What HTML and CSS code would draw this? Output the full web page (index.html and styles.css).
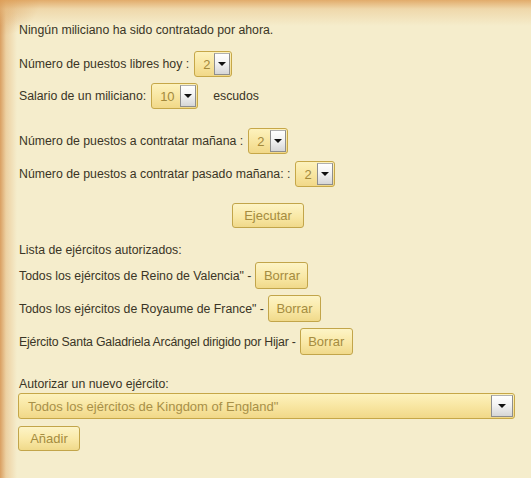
FILE: index.html
```html
<!DOCTYPE html>
<html lang="es">
<head>
<meta charset="utf-8">
<title>Milicia</title>
<link rel="stylesheet" href="styles.css">
</head>
<body>
<div class="page">
  <p class="line l1">Ningún miliciano ha sido contratado por ahora.</p>

  <div class="row r2">
    <span>Número de puestos libres hoy :</span>
    <span class="sel w37"><span class="val">2</span><span class="arrow"></span></span>
  </div>
  <div class="row r3">
    <span>Salario de un miliciano:</span>
    <span class="sel w46"><span class="val">10</span><span class="arrow"></span></span>
    <span class="unit">escudos</span>
  </div>

  <div class="row r4">
    <span>Número de puestos a contratar mañana :</span>
    <span class="sel w39"><span class="val">2</span><span class="arrow"></span></span>
  </div>
  <div class="row r5">
    <span>Número de puestos a contratar pasado mañana: :</span>
    <span class="sel w39"><span class="val">2</span><span class="arrow"></span></span>
  </div>

  <div class="center r6">
    <button class="btn exec">Ejecutar</button>
  </div>

  <p class="line l7">Lista de ejércitos autorizados:</p>
  <div class="row r8">
    <span>Todos los ejércitos de Reino de Valencia" -</span>
    <button class="btn borrar">Borrar</button>
  </div>
  <div class="row r9">
    <span>Todos los ejércitos de Royaume de France" -</span>
    <button class="btn borrar">Borrar</button>
  </div>
  <div class="row r10">
    <span class="tight">Ejército Santa Galadriela Arcángel dirigido por Hijar -</span>
    <button class="btn borrar">Borrar</button>
  </div>

  <p class="line l11">Autorizar un nuevo ejército:</p>
  <div class="sel big"><span class="val">Todos los ejércitos de Kingdom of England"</span><span class="arrow"></span></div>
  <button class="btn add">Añadir</button>
</div>
</body>
</html>
```

FILE: styles.css
```css
html, body {
  margin: 0;
  height: 100%;
}
body {
  font-family: "Liberation Sans", Arial, sans-serif;
  font-size: 12.3px;
  color: #3a3526;
  background-color: #f5edcc;
  background-image:
    linear-gradient(to bottom, rgba(222,160,90,0.85) 0px, rgba(232,190,130,0.45) 9px, rgba(245,237,204,0) 26px),
    linear-gradient(to right, rgba(214,150,85,0.9) 0px, rgba(228,180,120,0.5) 6px, rgba(245,237,204,0) 17px),
    radial-gradient(ellipse at 0 0, rgba(210,140,70,0.6) 0, rgba(245,237,204,0) 40px);
  overflow: hidden;
}
.page {
  padding: 23px 0 0 19px;
  display: flex;
  flex-direction: column;
  align-items: flex-start;
}
.line {
  margin: 0;
  line-height: 14px;
  height: 14px;
}
.row {
  display: flex;
  align-items: center;
  height: 26px;
  white-space: nowrap;
}
.tight { letter-spacing: -0.2px; }
.center {
  align-self: stretch;
  display: flex;
  justify-content: center;
  padding-right: 19px;
}

.r2 { margin-top: 14px; }
.r3 { margin-top: 6px; }
.r4 { margin-top: 19px; }
.r5 { margin-top: 7px; }
.r6 { margin-top: 16px; }
.l7 { margin-top: 15px; }
.r8 { margin-top: 5px; height: 27px; }
.r9 { margin-top: 6px; height: 27px; }
.r10 { margin-top: 6px; height: 27px; }
.l11 { margin-top: 22px; }

.sel {
  box-sizing: border-box;
  display: inline-flex;
  align-items: stretch;
  height: 26px;
  margin-left: 5px;
  border: 1px solid #c6a748;
  border-radius: 3px;
  background: linear-gradient(to bottom, #fdf2bd 0%, #f8e6a2 50%, #f1d888 100%);
  padding: 1px;
  color: #a3893c;
  font-size: 13px;
}
.sel .val {
  flex: 1;
  display: flex;
  align-items: center;
  padding-left: 7px;
}
.sel .arrow {
  box-sizing: border-box;
  width: 16px;
  border: 1px solid #8e8e8e;
  border-top-color: #b0b0b0;
  background: linear-gradient(to bottom, #ffffff 0%, #f3f3f3 45%, #d6d6d6 100%);
  position: relative;
}
.sel .arrow::after {
  content: "";
  position: absolute;
  left: 50%;
  top: 50%;
  margin-left: -4px;
  margin-top: -2px;
  border-left: 4px solid transparent;
  border-right: 4px solid transparent;
  border-top: 4px solid #111;
}
.w37 { width: 38px; }
.w46 { width: 47px; }
.w39 { width: 40px; }
.unit { margin-left: 15px; }

.sel.big {
  margin: 2px 0 0 -1px;
  width: 497px;
  height: 26px;
}
.sel.big .val { padding-left: 8px; color: #a89048; }
.sel.big .arrow { width: 22px; }

.btn {
  box-sizing: border-box;
  font-family: "Liberation Sans", Arial, sans-serif;
  font-size: 13px;
  color: #a58c40;
  border: 1px solid #c2a54a;
  border-radius: 3px;
  background: linear-gradient(to bottom, #fdf4c6 0%, #f9e8a6 55%, #f0d98a 100%);
  padding: 0;
  cursor: pointer;
}
.exec { width: 72px; height: 25px; margin-left: 5px; }
.borrar { width: 53px; height: 27px; margin-left: 4px; }
.add { width: 62px; height: 25px; margin-top: 7px; margin-left: -1px; }
```
